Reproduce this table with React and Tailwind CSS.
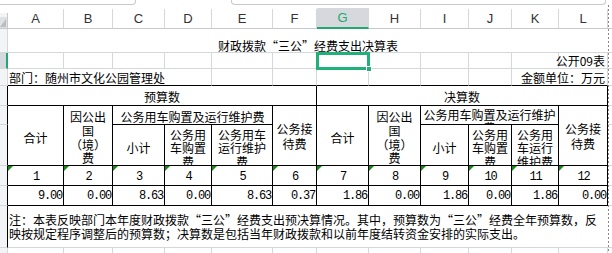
import React from 'react';

const COL = ['', 'col-start-1', 'col-start-2', 'col-start-3', 'col-start-4', 'col-start-5', 'col-start-6', 'col-start-7', 'col-start-8', 'col-start-9', 'col-start-10', 'col-start-11', 'col-start-12', 'col-start-13', 'col-start-14'];
const LETTERS = ['A', 'B', 'C', 'D', 'E', 'F', 'G', 'H', 'I', 'J', 'K', 'L'];
const VALUES = ['9.00', '0.00', '8.63', '0.00', '8.63', '0.37', '1.86', '0.00', '1.86', '0.00', '1.86', '0.00'];

function Tri() {
  return (
    <svg className="absolute left-0 top-0" width="5" height="5" viewBox="0 0 5 5">
      <polygon points="0,0 5,0 0,5" fill="#128c12" />
    </svg>
  );
}

function L({ children }) {
  return <div className="whitespace-nowrap">{children}</div>;
}

export default function App() {
  return (
    <div lang="zh-CN" className="relative w-[612px] h-[253px] overflow-hidden bg-white text-black text-[12px] font-['Noto_Sans_CJK_SC',sans-serif]">
      {/* tab strip */}
      <div className="flex h-[5px]">
        <div className="w-[136px] border-b border-r border-[#c6c9ce] rounded-br-[4px]" />
        <div className="w-[95px]" />
        <div className="w-[375px] border-b border-l border-r border-[#c6c9ce] rounded-bl-[4px] rounded-br-[4px]" />
      </div>

      <div className="grid h-[248px] grid-cols-[8px_56px_49px_52px_47px_61px_44px_52px_52px_48px_43px_47px_49px_1fr] grid-rows-[24px_24px_16px_17px_20px_19px_41px_20px_20px_42px_5px]">
        {/* corner */}
        <div className="col-start-1 row-start-1 flex flex-col">
          <div className="h-[8px]" />
          <div className="flex-1 border-b border-r border-[#c6c9ce] bg-[#f3f4f6] relative">
            <svg className="absolute left-0 top-[4px]" width="7" height="11" viewBox="0 0 7 11">
              <rect x="0" y="0" width="7" height="11" fill="#dfe1e4" />
              <polygon points="6,2 6,10 0,10" fill="#b9bcc1" />
            </svg>
          </div>
        </div>

        {/* column letters */}
        {LETTERS.map((l, i) => (
          <div key={l} className={`${COL[i + 2]} row-start-1 flex flex-col`}>
            <div className="h-[8px]" />
            <div
              className={`flex-1 flex items-center justify-center border-r border-r-[#d4d7dc] text-[13px] font-['Liberation_Sans',sans-serif] ${
                l === 'G'
                  ? 'bg-[#d5d8dd] text-[#21a870] border-b-2 border-b-[#21a870]'
                  : 'text-[#333333] border-b border-b-[#c6c9ce]'
              }`}
            >
              {l}
            </div>
          </div>
        ))}
        <div className="col-start-14 row-start-1 flex flex-col">
          <div className="h-[8px]" />
          <div className="flex-1 border-b border-[#c6c9ce]" />
        </div>

        {/* row headers */}
        <div className="col-start-1 row-start-2 bg-[#f3f4f6] border-r border-b border-[#d4d7dc]" />
        <div className="col-start-1 row-start-3 bg-[#d5d8dd] border-b border-b-[#d4d7dc] border-r-2 border-r-[#21a870]" />
        <div className="col-start-1 row-start-4 bg-[#f3f4f6] border-r border-b border-[#d4d7dc]" />
        <div className="col-start-1 row-start-5 bg-[#f3f4f6] border-b border-b-[#d4d7dc] border-r border-r-black" />
        <div className="col-start-1 row-start-6 bg-[#f3f4f6] border-b border-b-[#d4d7dc] border-r border-r-black" />
        <div className="col-start-1 row-start-7 bg-[#f3f4f6] border-b border-b-[#d4d7dc] border-r border-r-black" />
        <div className="col-start-1 row-start-8 bg-[#f3f4f6] border-b border-b-[#d4d7dc] border-r border-r-black" />
        <div className="col-start-1 row-start-9 bg-[#f3f4f6] border-b border-b-[#d4d7dc] border-r border-r-black" />
        <div className="col-start-1 row-start-10 bg-[#f3f4f6] border-b border-b-[#d4d7dc] border-r border-r-black" />
        <div className="col-start-1 row-start-11 bg-[#f3f4f6] border-r border-[#d4d7dc]" />

        {/* title row */}
        <div className="col-start-2 col-span-12 row-start-2 border-b border-[#d4d7dc] flex items-end justify-center leading-[12px] whitespace-nowrap">
          财政拨款“三公”经费支出决算表
        </div>
        <div className="col-start-14 row-start-2 border-b border-[#d4d7dc]" />

        {/* row 2 */}
        {LETTERS.map((l, i) => (
          <div key={l} className={`${COL[i + 2]} row-start-3 relative border-r border-b border-[#d4d7dc] flex items-end justify-end leading-[14px] pr-[2px]`}>
            {l === 'L' && <span className="whitespace-nowrap">公开09表</span>}
            {l === 'G' && (
              <div className="absolute -left-[1px] -top-[1px] -right-[2px] -bottom-[2px] border-[3px] border-[#21b07a] z-10">
                <div className="absolute -right-[5px] -bottom-[5px] w-[6px] h-[6px] bg-[#21b07a] border border-white" />
              </div>
            )}
          </div>
        ))}
        <div className="col-start-14 row-start-3 border-b border-[#d4d7dc]" />

        {/* row 3: department */}
        <div className="col-start-2 col-span-4 row-start-4 border-b border-b-black border-r border-r-[#d4d7dc] flex items-end pl-[1px] leading-[14px] whitespace-nowrap">
          部门：随州市文化公园管理处
        </div>
        <div className="col-start-6 row-start-4 border-b border-b-black border-r border-r-[#d4d7dc]" />
        <div className="col-start-7 row-start-4 border-b border-b-black border-r border-r-[#d4d7dc]" />
        <div className="col-start-8 row-start-4 border-b border-b-black border-r border-r-[#d4d7dc]" />
        <div className="col-start-9 row-start-4 border-b border-b-black border-r border-r-[#d4d7dc]" />
        <div className="col-start-10 row-start-4 border-b border-b-black border-r border-r-[#d4d7dc]" />
        <div className="col-start-11 row-start-4 border-b border-b-black border-r border-r-[#d4d7dc]" />
        <div className="col-start-12 col-span-2 row-start-4 border-b border-b-black border-r border-r-[#d4d7dc] flex items-end justify-end pr-[2px] leading-[14px] whitespace-nowrap">
          金额单位：万元
        </div>
        <div className="col-start-14 row-start-4 border-b border-[#d4d7dc]" />

        {/* row 4: group titles */}
        <div className="col-start-2 col-span-6 row-start-5 border-r border-b border-black flex items-center justify-center pt-[2px] leading-[14px]">
          预算数
        </div>
        <div className="col-start-8 col-span-6 row-start-5 border-r border-b border-black flex items-center justify-center pt-[2px] leading-[14px]">
          决算数
        </div>
        <div className="col-start-14 row-start-5 border-b border-[#d4d7dc]" />

        {/* header block - budget */}
        <div className="col-start-2 row-start-6 row-span-2 border-r border-b border-black flex items-center justify-center pt-[4px] leading-[14px]">
          合计
        </div>
        <div className="col-start-3 row-start-6 row-span-2 border-r border-b border-black flex flex-col items-center justify-center pt-[4px] leading-[13.7px]">
          <L>因公出</L>
          <L>国</L>
          <L>（境）</L>
          <L>费</L>
        </div>
        <div className="col-start-4 col-span-3 row-start-6 border-r border-b border-black flex items-center justify-center pt-[4px] leading-[14px] whitespace-nowrap overflow-hidden">
          公务用车购置及运行维护费
        </div>
        <div className="col-start-4 row-start-7 border-r border-b border-black flex items-center justify-center pt-[5px] leading-[14px]">
          小计
        </div>
        <div className="col-start-5 row-start-7 border-r border-b border-black flex flex-col items-center justify-start pt-[3px] leading-[13.4px] overflow-hidden">
          <L>公务用</L>
          <L>车购置</L>
          <L>费</L>
        </div>
        <div className="col-start-6 row-start-7 border-r border-b border-black flex flex-col items-center justify-start pt-[3px] leading-[13.4px] overflow-hidden">
          <L>公务用车</L>
          <L>运行维护</L>
          <L>费</L>
        </div>
        <div className="col-start-7 row-start-6 row-span-2 border-r border-b border-black flex flex-col items-center justify-center pt-[2px] leading-[14.4px]">
          <L>公务接</L>
          <L>待费</L>
        </div>

        {/* header block - final accounts */}
        <div className="col-start-8 row-start-6 row-span-2 border-r border-b border-black flex items-center justify-center pt-[4px] leading-[14px]">
          合计
        </div>
        <div className="col-start-9 row-start-6 row-span-2 border-r border-b border-black flex flex-col items-center justify-center pt-[4px] leading-[13.7px]">
          <L>因公出</L>
          <L>国</L>
          <L>（境）</L>
          <L>费</L>
        </div>
        <div className="col-start-10 col-span-3 row-start-6 border-r border-b border-black flex flex-col items-center justify-start pt-[2px] leading-[13px] overflow-hidden">
          <L>公务用车购置及运行维护</L>
          <L>费</L>
        </div>
        <div className="col-start-10 row-start-7 border-r border-b border-black flex items-center justify-center pt-[5px] leading-[14px]">
          小计
        </div>
        <div className="col-start-11 row-start-7 border-r border-b border-black flex flex-col items-center justify-start pt-[3px] leading-[13.4px] overflow-hidden">
          <L>公务用</L>
          <L>车购置</L>
          <L>费</L>
        </div>
        <div className="col-start-12 row-start-7 border-r border-b border-black flex flex-col items-center justify-start pt-[3px] leading-[13.4px] overflow-hidden">
          <L>公务用</L>
          <L>车运行</L>
          <L>维护费</L>
        </div>
        <div className="col-start-13 row-start-6 row-span-2 border-r border-b border-black flex flex-col items-center justify-center pt-[2px] leading-[14.4px]">
          <L>公务接</L>
          <L>待费</L>
        </div>
        <div className="col-start-14 row-start-6 border-b border-[#d4d7dc]" />
        <div className="col-start-14 row-start-7 border-b border-[#d4d7dc]" />

        {/* numbers row */}
        {LETTERS.map((l, i) => (
          <div key={l} className={`${COL[i + 2]} row-start-8 relative border-r border-b border-black flex items-center justify-center pt-[2px] text-[12px] leading-[12px] tracking-[-1.2px] font-['Liberation_Mono',monospace]`}>
            <Tri />
            <span className="pl-[1.2px]">{i + 1}</span>
          </div>
        ))}
        <div className="col-start-14 row-start-8 border-b border-[#d4d7dc]" />

        {/* values row */}
        {VALUES.map((v, i) => (
          <div key={i} className={`${COL[i + 2]} row-start-9 border-r border-b border-black flex items-center justify-end pr-[1px] pt-[1px] text-[12px] leading-[12px] tracking-[-1.2px] font-['Liberation_Mono',monospace]`}>
            {v}
          </div>
        ))}
        <div className="col-start-14 row-start-9 border-b border-[#d4d7dc]" />

        {/* note row */}
        <div className="col-start-2 col-span-12 row-start-10 border-b border-[#d4d7dc] flex flex-col justify-center pl-[1px] pt-[1px] leading-[14px]">
          <L>注：本表反映部门本年度财政拨款“三公”经费支出预决算情况。其中，预算数为“三公”经费全年预算数，反</L>
          <L>映按规定程序调整后的预算数；决算数是包括当年财政拨款和以前年度结转资金安排的实际支出。</L>
        </div>
        <div className="col-start-14 row-start-10 border-b border-[#d4d7dc]" />

        {/* last partial row */}
        {LETTERS.map((l, i) => (
          <div key={l} className={`${COL[i + 2]} row-start-11 border-r border-[#d4d7dc]`} />
        ))}
      </div>

      {/* page break dashed line */}
      <div className="absolute left-[608px] top-[5px] bottom-0 w-[1px] bg-[repeating-linear-gradient(to_bottom,#8a8a8a_0px,#8a8a8a_2px,transparent_2px,transparent_4px)] z-20" />
    </div>
  );
}
